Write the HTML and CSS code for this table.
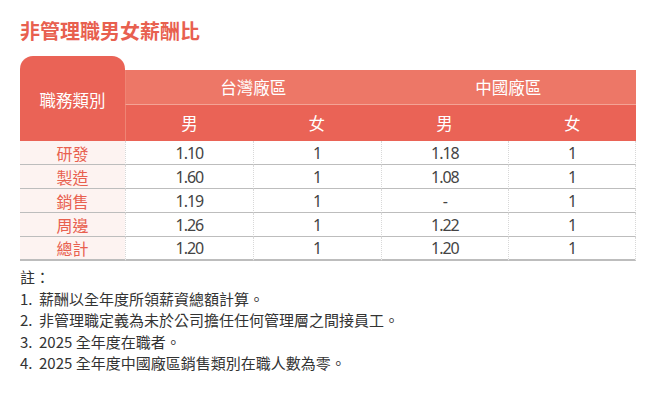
FILE: index.html
```html
<!DOCTYPE html>
<html lang="zh-Hant">
<head>
<meta charset="utf-8">
<link rel="stylesheet" href="styles.css">
</head>
<body>
<div class="page">
  <h1 class="title">非管理職男女薪酬比</h1>
  <div class="grid">
    <div class="h-cat">職務類別</div>
    <div class="h-spacer"></div>
    <div class="h-region tw">台灣廠區</div>
    <div class="h-region cn">中國廠區</div>
    <div class="h-sex first">男</div>
    <div class="h-sex">女</div>
    <div class="h-sex">男</div>
    <div class="h-sex">女</div>

    <div class="c-cat">研發</div><div class="c">1.10</div><div class="c">1</div><div class="c">1.18</div><div class="c end">1</div>
    <div class="c-cat">製造</div><div class="c">1.60</div><div class="c">1</div><div class="c">1.08</div><div class="c end">1</div>
    <div class="c-cat">銷售</div><div class="c">1.19</div><div class="c">1</div><div class="c">-</div><div class="c end">1</div>
    <div class="c-cat">周邊</div><div class="c">1.26</div><div class="c">1</div><div class="c">1.22</div><div class="c end">1</div>
    <div class="c-cat last">總計</div><div class="c last">1.20</div><div class="c last">1</div><div class="c last">1.20</div><div class="c last end">1</div>
  </div>
  <div class="notes">
    <p>註：</p>
    <p><span class="num">1.</span>薪酬以全年度所領薪資總額計算。</p>
    <p><span class="num">2.</span>非管理職定義為未於公司擔任任何管理層之間接員工。</p>
    <p><span class="num">3.</span>2025 全年度在職者。</p>
    <p><span class="num">4.</span>2025 全年度中國廠區銷售類別在職人數為零。</p>
  </div>
</div>
</body>
</html>
```
FILE: styles.css
```css
html, body {
  margin: 0;
  padding: 0;
  background: #ffffff;
}
.page {
  padding: 20px 29px 0 20px;
  font-family: "Noto Sans CJK TC", "Noto Sans", sans-serif;
}
.title {
  margin: 0;
  font-size: 20px;
  line-height: 22px;
  font-weight: 700;
  color: #e8604f;
}
.grid {
  margin-top: 14px;
  display: grid;
  grid-template-columns: 105px repeat(4, 1fr);
  grid-template-rows: 14px 35px 36px repeat(5, 24px);
  width: 616px;
}
.h-cat {
  grid-column: 1;
  grid-row: 1 / 4;
  background: #ea6356;
  border-radius: 13px 13px 0 0;
  color: #fff;
  font-size: 16.5px;
  display: flex;
  align-items: center;
  justify-content: center;
  padding-top: 2px;
  box-sizing: border-box;
}
.h-spacer {
  grid-column: 2 / 6;
  grid-row: 1;
}
.h-region {
  grid-row: 2;
  background: #ed7767;
  color: #fff;
  font-size: 16.5px;
  display: flex;
  align-items: center;
  justify-content: center;
  border-bottom: 1px solid #f4a395;
}
.tw { grid-column: 2 / 4; border-left: 1px solid #ef8474; }
.cn { grid-column: 4 / 6; }
.h-sex {
  grid-row: 3;
  background: #ea6356;
  color: #fff;
  font-size: 16.5px;
  display: flex;
  align-items: center;
  justify-content: center;
}
.h-sex.first { border-left: 1px solid #ef8474; }
.c, .c-cat {
  display: flex;
  align-items: center;
  justify-content: center;
  border-bottom: 1px solid #bdbdbd;
  border-left: 1px dotted #d8d8d8;
  font-size: 15px;
  box-sizing: border-box;
}
.c {
  color: #444;
  font-family: "Noto Sans", sans-serif;
  font-size: 16px;
  letter-spacing: -1px;
}
.c.end { border-right: 1px dotted #d8d8d8; }
.c-cat {
  background: #fdf3f1;
  color: #e8604f;
  font-size: 16px;
  border-left: none;
}
.last { border-bottom: 2px solid #bdbdbd; }
.notes {
  margin-top: 5px;
  font-size: 15px;
  line-height: 21.6px;
  color: #333;
}
.notes p { margin: 0; }
.num {
  display: inline-block;
  width: 19px;
}
```
